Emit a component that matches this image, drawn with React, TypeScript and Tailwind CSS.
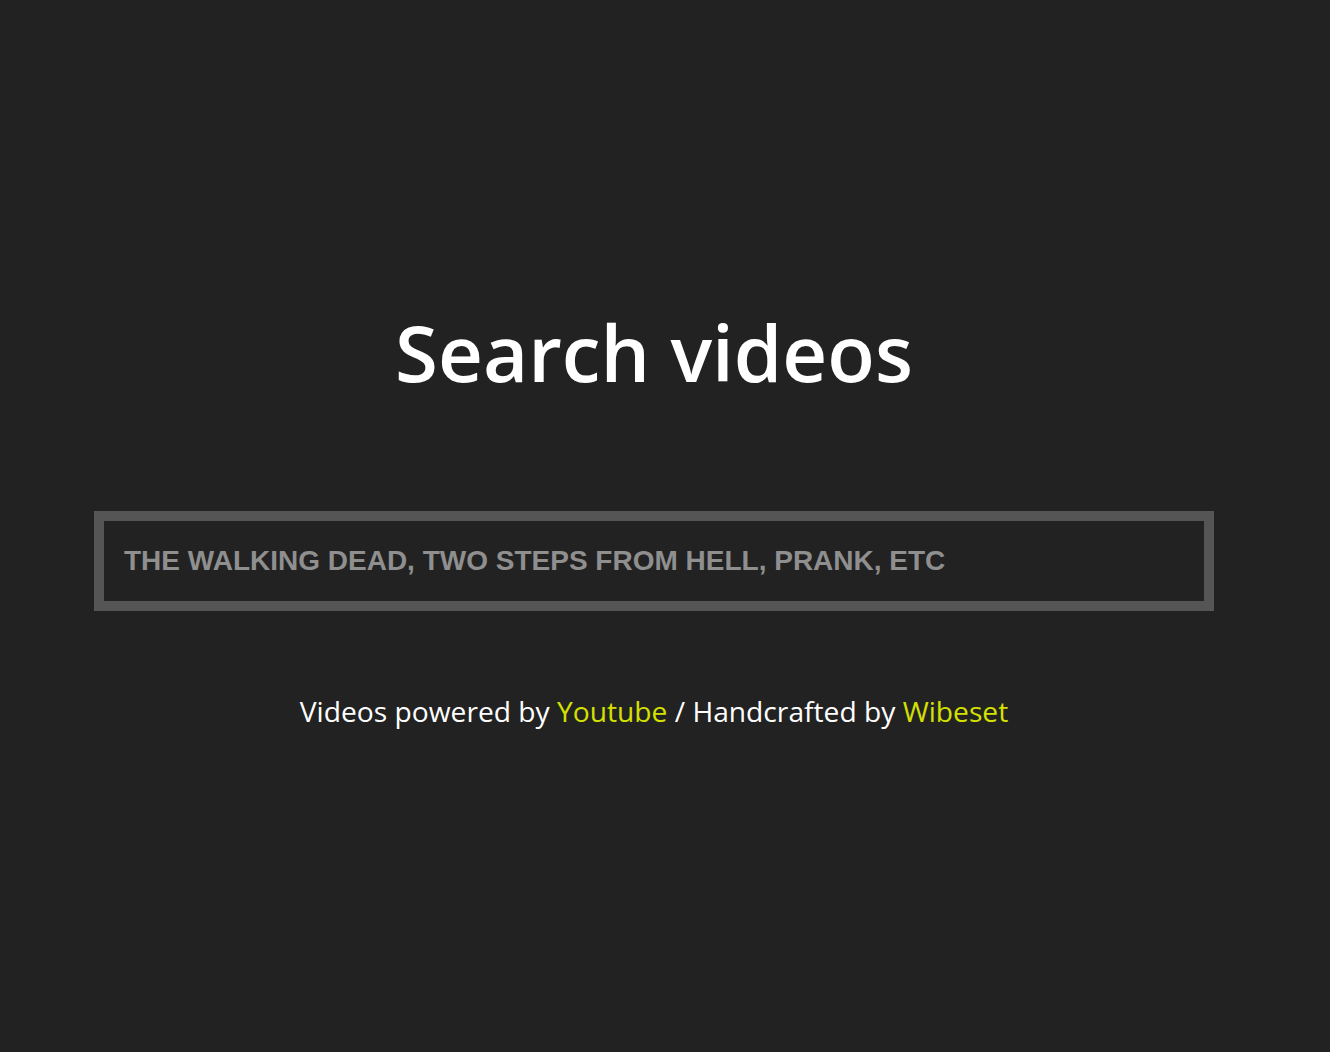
export default function App() {
  return (
    <div className="min-h-[1052px] w-full bg-[#222222]">
      <div className="w-[1308px] flex flex-col items-center pt-[297px]">
        <h1 className="text-[78px] leading-[110px] font-semibold text-white [font-family:'Open_Sans',sans-serif]">
          Search videos
        </h1>
        <div className="mt-[104px] w-[1120px] h-[100px] border-[10px] border-[#555555] bg-[#222222] flex items-center px-[20px]">
          <input
            className="w-full bg-transparent outline-none text-[28px] font-bold uppercase text-[#8f8f8f] placeholder:text-[#8f8f8f] [font-family:'Liberation_Sans',Arial,sans-serif]"
            placeholder="THE WALKING DEAD, TWO STEPS FROM HELL, PRANK, ETC"
          />
        </div>
        <p className="mt-[80px] text-[28.2px] leading-[40px] text-white [font-family:'Open_Sans',sans-serif]">
          Videos powered by <a className="text-[#d4e000]">Youtube</a> / Handcrafted by{" "}
          <a className="text-[#d4e000]">Wibeset</a>
        </p>
      </div>
    </div>
  );
}
